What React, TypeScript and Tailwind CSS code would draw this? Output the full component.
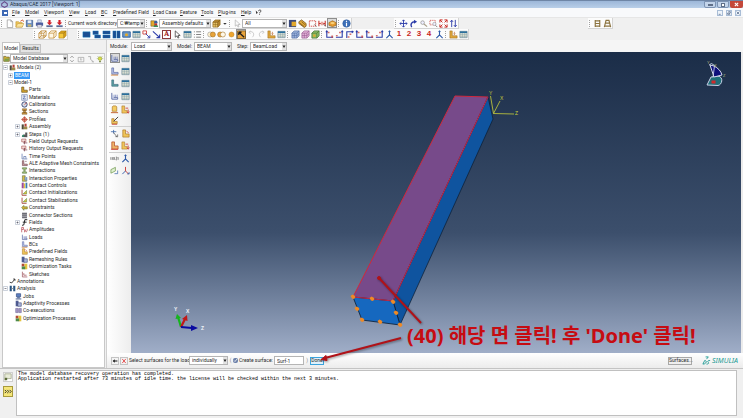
import * as React from "react";

const NAVY = "#1d4f91";
const GOLD = "#e3a92c";
const RED = "#c8322c";
const BLUE = "#2a3aa8";

// every glyph is drawn in a 10x10 box
const GLYPHS: Record<string, React.ReactNode> = {
  file: <path d="M2.5 1h4l2 2v6.500h-6z M6.500 1v2h2" fill="#fff" stroke="#8a8a8a" strokeWidth=".7" />,
  open: (
    <>
      <path d="M1 9V3h3l1 1h3v5z" fill="#f1c95c" stroke="#b98a24" strokeWidth=".6" />
      <path d="M1 9l2-4h7L8 9z" fill="#fbe39b" stroke="#b98a24" strokeWidth=".5" />
      <path d="M6 2.500l2.500-1.500 1 2" fill="none" stroke="#d2552a" strokeWidth="1" />
    </>
  ),
  save: (
    <>
      <path d="M1.500 1.500h7v7h-7z" fill="#6d8fc4" stroke="#38588d" strokeWidth=".8" />
      <path d="M3 1.500h4v3H3z" fill="#e9eef7" />
      <path d="M3 6h4v2.500H3z" fill="#cbb66b" />
    </>
  ),
  print: (
    <>
      <path d="M3 1h4v3H3z" fill="#dfe6f3" stroke="#62739c" strokeWidth=".5" />
      <path d="M1 4h8v3.500H1z" fill="#4c5fa4" />
      <path d="M2.500 6.500h5V9h-5z" fill="#eef" stroke="#556" strokeWidth=".5" />
    </>
  ),
  down: (
    <>
      <path d="M3.800 1h2.400v3H8L5 7 2 4h1.800z" fill="#d0202a" />
      <path d="M1.500 7h7v2h-7z" fill="#5b6d9a" />
    </>
  ),
  people: (
    <>
      <path d="M1 2h4v6H1z" fill={GOLD} stroke="#6b5520" strokeWidth=".6" />
      <circle cx="6.500" cy="3.500" r="1.800" fill="#3a5f9e" />
      <path d="M4 9c0-4 5-4 5 0z" fill="#3c8a58" />
      <path d="M5 5h3v2H5z" fill={RED} />
    </>
  ),
  cube: (
    <>
      <path d="M1 3.500h5.500V9H1z" fill="#e9c56a" stroke="#8a6418" strokeWidth=".7" />
      <path d="M1 3.500l2.500-2.500H9L6.500 3.500zM6.500 3.500L9 1v5.500L6.500 9z" fill="#b98a34" stroke="#8a6418" strokeWidth=".7" />
      <path d="M3.700 3.500V9M1 6.200h5.500" stroke="#8a6418" strokeWidth=".6" />
    </>
  ),
  cubeWire: (
    <path d="M1 3.500h5.500V9H1zM3.500 1H9v5.500H3.500zM1 3.500L3.500 1M6.500 3.500L9 1M6.500 9L9 6.500M1 9l2.500-2.500" fill="none" stroke="#b87d22" strokeWidth=".8" />
  ),
  cubeHidden: (
    <path d="M1 3.500h5.500V9H1zL3.500 1H9v5.500L6.500 9M6.500 3.500L9 1" fill="#fff8e6" stroke="#c08a33" strokeWidth=".8" />
  ),
  cubeSolid: (
    <>
      <path d="M1 3.500h5.500V9H1z" fill="#f6c93a" stroke="#a87a14" strokeWidth=".6" />
      <path d="M1 3.500l2.500-2.500H9L6.500 3.500zM6.500 3.500L9 1v5.500L6.500 9z" fill="#d9a31c" stroke="#a87a14" strokeWidth=".6" />
    </>
  ),
  cubeBlue: (
    <>
      <path d="M1 3.500l2.500-2.500H9v5.500L6.500 9H1z" fill="#9db4dc" stroke="#4c68a0" strokeWidth=".7" />
      <path d="M1 3.500h5.500V9M6.500 3.500L9 1M3.700 3.500V9M1 6.200h5.500L9 4" fill="none" stroke="#4c68a0" strokeWidth=".6" />
    </>
  ),
  cubePink: (
    <>
      <path d="M1 3.500l2.500-2.500H9v5.500L6.500 9H1z" fill="#e3b5d8" stroke="#91508c" strokeWidth=".7" />
      <path d="M1 3.500h5.500V9M6.500 3.500L9 1M3.700 3.500V9M1 6.200h5.500L9 4" fill="none" stroke="#91508c" strokeWidth=".6" />
    </>
  ),
  cubeGreen: (
    <>
      <path d="M1 3.500l2.500-2.500H9v5.500L6.500 9H1z" fill="#8fc06a" stroke="#3f6f2a" strokeWidth=".8" />
      <path d="M1 3.500h5.500V9M6.500 3.500L9 1" fill="none" stroke="#3f6f2a" strokeWidth=".7" />
      <path d="M2.500 5h2.500v2.500H2.500z" fill={GOLD} />
    </>
  ),
  cursor: <path d="M2.500 1v7l2-1.500 1 2.500 1.200-.6-1.100-2.300H8z" fill="#fff" stroke="#333" strokeWidth=".8" />,
  cursorDim: <path d="M2.500 1v7l2-1.500 1 2.500 1.200-.6-1.100-2.300H8z" fill="#fafafa" stroke="#aaa" strokeWidth=".7" />,
  pickA: (
    <>
      <path d="M1 1h8v8H1z" fill="#3b4a7b" />
      <path d="M4 3h5v5H4z" fill={GOLD} />
    </>
  ),
  pickB: (
    <>
      <path d="M1 3l3-2 5 4v3L7 9.500 1 5z" fill="#e0a93a" stroke="#6c4a12" strokeWidth=".8" />
      <path d="M2 4.500l5 4M4 3l4 3.500" stroke="#6c4a12" strokeWidth=".7" />
    </>
  ),
  pickBox: (
    <>
      <path d="M1.500 2h7v6h-7z" fill="none" stroke={RED} strokeWidth=".9" strokeDasharray="1.600 .8" />
      <path d="M7 6l2.500 2.500" stroke="#555" strokeWidth=".8" />
    </>
  ),
  pickH: (
    <>
      <path d="M1 2v6M8 2v6M1 5h7" stroke={RED} strokeWidth="1.200" fill="none" />
      <path d="M3 3h3v4H3z" fill="#e9a49d" />
      <path d="M6 6l3 2" stroke="#555" strokeWidth=".8" />
    </>
  ),
  ellipse: (
    <>
      <path d="M1 4l4-2 4 2v3L5 8.500 1 7z" fill="#e59b2e" stroke="#8d5a14" strokeWidth=".6" />
      <ellipse cx="5" cy="4.500" rx="2.500" ry="1.200" fill="#f8d07a" />
    </>
  ),
  info: (
    <>
      <circle cx="5" cy="5" r="4.200" fill="#3c6fb8" stroke="#24508f" strokeWidth=".5" />
      <path d="M5 4.300V8M5 2v1.200" stroke="#fff" strokeWidth="1.300" />
    </>
  ),
  move: (
    <path d="M5 1v8M1 5h8M3.600 2.400L5 1l1.400 1.400M3.600 7.600L5 9l1.400-1.400M2.400 3.600L1 5l1.400 1.400M7.600 3.600L9 5 7.600 6.400" fill="none" stroke={BLUE} strokeWidth="1" />
  ),
  rotate: (
    <>
      <path d="M3 9C1 6 3 3 6.500 3" fill="none" stroke={BLUE} strokeWidth="1.600" />
      <path d="M5.500 .8L9 3 5.500 5.400z" fill={BLUE} />
    </>
  ),
  lens: (
    <>
      <circle cx="4" cy="4" r="2" fill="#eef" stroke="#9b9b9b" strokeWidth=".9" />
      <path d="M5.500 5.500L9 8.500" stroke="#a9a08c" strokeWidth="1.300" />
    </>
  ),
  lensBox: (
    <>
      <path d="M1 1.500h6v5H1z" fill="none" stroke={RED} strokeWidth=".8" strokeDasharray="1.200 .8" />
      <circle cx="6" cy="5.500" r="1.800" fill="#eef" stroke="#999" strokeWidth=".7" />
      <path d="M7.200 7l2 2" stroke="#777" strokeWidth="1" />
    </>
  ),
  fit: (
    <>
      <path d="M1 4V1h3M6 1h3v3M9 6v3H6M4 9H1V6M1 1l2.800 2.800M9 1L6.200 3.800M9 9L6.200 6.200M1 9l2.800-2.800" fill="none" stroke={RED} strokeWidth="1.100" />
    </>
  ),
  updown: <path d="M3 9V1.500M1.500 3.200L3 1.300l1.500 1.900M7 1v7.500M5.500 6.800L7 8.700l1.500-1.900" fill="none" stroke={BLUE} strokeWidth="1" />,
  ladder: <path d="M2.500 1v8M7.500 1v8M2.500 2h5M2.500 5h5M2.500 8h5" stroke="#8c7440" strokeWidth="1.300" fill="none" />,
  ladderWide: <path d="M3.500 1L1.500 9M6.500 1l2 8M3.500 1.500h3M3 4.500h4M2 8h6" stroke="#8c7440" strokeWidth="1.300" fill="none" />,
  win1: <path d="M1 2h8v6H1z" fill={NAVY} stroke="#0c7fc0" strokeWidth=".5" />,
  win2: <path d="M1 1h6v4H1zM3 5.500h6.500V9H3z" fill={NAVY} stroke="#0c7fc0" strokeWidth=".4" />,
  win3: <path d="M1 1h8v3.500H1zM1 5.500h8V9H1z" fill={NAVY} stroke="#0c7fc0" strokeWidth=".4" />,
  win4: <path d="M1 1h3.500v8H1zM5.500 1H9v8H5.500z" fill={NAVY} stroke="#0c7fc0" strokeWidth=".4" />,
  image: (
    <>
      <path d="M.8 2h8.400v6H.8z" fill="#6f9ac8" stroke={NAVY} strokeWidth=".9" />
      <circle cx="5" cy="5.200" r="1.700" fill={GOLD} />
    </>
  ),
  table: (
    <>
      <path d="M1 1.500h8v7H1z" fill="#f3f0dc" stroke="#5b7d8f" strokeWidth=".7" />
      <path d="M1 1.500h8v2H1z" fill="#2b6f9c" />
      <path d="M1 5.200h8M1 7h8M3.700 3.500v5M6.400 3.500v5" stroke="#7c9aa4" strokeWidth=".6" />
    </>
  ),
  callout: (
    <>
      <path d="M1 1h4v3.500H1z" fill="#fff" stroke={RED} strokeWidth=".9" />
      <path d="M4 4l4.500 4.500M6 8.700h2.700V6" stroke={BLUE} strokeWidth="1" fill="none" />
    </>
  ),
  arrow: <path d="M1 1.500L8 8M5 8.500h3.500V5" stroke={BLUE} strokeWidth="1.200" fill="none" />,
  lines: <path d="M3.500 2H9M3.500 5H9M3.500 8H9M1 2h1M1 5h1M1 8h1" stroke="#666" strokeWidth=".9" />,
  union: (
    <>
      <circle cx="3.500" cy="5" r="2.800" fill="#fff2d0" stroke="#8b8b8b" strokeWidth=".6" />
      <circle cx="6.500" cy="5" r="2.800" fill="#e8a33a" stroke="#9b6a1c" strokeWidth=".6" />
    </>
  ),
  intersect: (
    <>
      <circle cx="3.500" cy="5" r="2.800" fill="#e8a33a" stroke="#9b6a1c" strokeWidth=".6" />
      <circle cx="6.500" cy="5" r="2.800" fill="#fff8e8" stroke="#9b6a1c" strokeWidth=".6" />
    </>
  ),
  dot: <circle cx="5" cy="5" r="2.800" fill="#eea52f" stroke="#b27918" strokeWidth=".5" />,
  eraser: (
    <>
      <path d="M.5 1h9v8.500h-9z" fill="#e8a33a" stroke="#5d4211" strokeWidth=".7" />
      <path d="M2 2.500l6 5.500M2 2.500h3M2 2.500v3" stroke="#1d1d1d" strokeWidth="1.400" />
    </>
  ),
  undo: <path d="M3 2c4-1 6 3 3 6M2 2.500L4 1M2 2.500L4 4" stroke="#c2c2c2" strokeWidth=".9" fill="none" />,
  redo: <path d="M7 2C3 1 1 5 4 8M8 2.500L6 1M8 2.500L6 4" stroke="#c2c2c2" strokeWidth=".9" fill="none" />,
  lshape: (
    <>
      <path d="M1 1h2.600v5.400H9V9H1z" fill="#e0a83d" stroke="#9c6a18" strokeWidth=".6" />
      <path d="M6 2v3M5 4l1 1 1-1" stroke="#b85b1e" strokeWidth=".7" fill="none" />
    </>
  ),
  axL: (
    <>
      <path d="M2 1v7h7M1 2.500L2 1l1 1.500" stroke={BLUE} strokeWidth="1.200" fill="none" />
      <path d="M7 6h2v2.500H7zM3 2h2v1.500H3z" fill={RED} opacity=".7" />
    </>
  ),
  axR: (
    <>
      <path d="M8 1v7H1M7 2.500L8 1l1 1.500" stroke={BLUE} strokeWidth="1.200" fill="none" />
      <path d="M4.500 2h2v1.500h-2zM1 5.500h2V7H1z" fill={RED} opacity=".7" />
    </>
  ),
  axT: (
    <>
      <path d="M9 2H2v7M7.500 1L9 2 7.500 3" stroke={BLUE} strokeWidth="1.200" fill="none" />
      <path d="M5 4h2v1.500H5zM3 7h2v1.500H3z" fill={RED} opacity=".7" />
    </>
  ),
  triad: <path d="M5 1v4.500L1.500 9M5 5.500L8.500 9M4 2l1-1 1 1" stroke="#2d59a8" strokeWidth="1.200" fill="none" />,
  triadRed: (
    <>
      <path d="M5 1v4.500M5 5.500L8.500 9" stroke={RED} strokeWidth="1" fill="none" />
      <path d="M5 5.500L1.500 9M7 8.800h2V7" stroke="#2d59a8" strokeWidth="1" fill="none" />
    </>
  ),
  load: (
    <>
      <path d="M2 1v7h6.500V6H4" fill="#dfe5f3" stroke="#4c5b9a" strokeWidth=".9" />
      <path d="M4.500 3v2.500M6.200 3v2.500M8 3v2.500" stroke="#5c6eb0" strokeWidth=".7" />
    </>
  ),
  bc: (
    <>
      <path d="M2 1v7h7V6H4V1z" fill="#b9c6ea" stroke="#4c5b9a" strokeWidth=".7" />
      <path d="M1 9h8" stroke="#d17a2a" strokeWidth=".9" />
    </>
  ),
  field: <path d="M2 1v7h7V6H4V1z" fill="#5ea6a2" stroke="#33627d" strokeWidth=".7" />,
  yellowL: (
    <>
      <path d="M2 1h3v4.500h4V9H2z" fill="#efc45a" stroke="#a8701d" strokeWidth=".7" />
      <path d="M6 2l2.500 2.500" stroke={RED} strokeWidth=".8" />
    </>
  ),
  arrowL: (
    <>
      <path d="M1 1h3v5h3v3H1z" fill="#efc45a" stroke="#a8701d" strokeWidth=".6" />
      <path d="M5 3.500h3M8 5v4M6.500 7.500L8 9l1.500-1.500" stroke={RED} strokeWidth=".9" fill="none" />
    </>
  ),
  redL: (
    <>
      <path d="M2 1h3v4.500h4V9H2z" fill="#eeb36a" stroke="#b44a23" strokeWidth=".8" />
      <path d="M1 9.300h8" stroke={RED} strokeWidth=".8" />
    </>
  ),
  editL: (
    <>
      <path d="M2 3h2.500v3H8v2.500H2z" fill="#efc45a" stroke="#a8701d" strokeWidth=".7" />
      <path d="M9 1L4 6" stroke="#444" strokeWidth="1.100" />
      <path d="M2 9.300h6" stroke={RED} strokeWidth=".8" />
    </>
  ),
  block: (
    <>
      <path d="M2.500 2l1-1h3l1 1v5h-5z" fill="#f3cd64" stroke="#a8701d" strokeWidth=".7" />
      <path d="M1 8.500h8" stroke="#c05822" strokeWidth="1" />
    </>
  ),
  cut: (
    <>
      <path d="M1 3h6M4 1v4" stroke="#3b67a8" strokeWidth=".9" />
      <path d="M4 4l4 5M6 8.500h2.500V6" stroke="#555" strokeWidth=".8" fill="none" />
    </>
  ),
  xyz: (
    <>
      <path d="M1 3.500v3M9 3.500v3" stroke="#444" strokeWidth=".7" />
      <path d="M2.500 3.500l1.500 3M4 3.500l-1.500 3M5 3.500v3M6.500 3.500h1.300l-1.300 3h1.300" stroke="#444" strokeWidth=".6" fill="none" />
    </>
  ),
  plane: (
    <>
      <path d="M1 4l5-2.500v4L1 8z" fill="#dff0d0" stroke="#5f8a3c" strokeWidth=".7" />
      <path d="M5 8.500h3.500V5" stroke="#3b67a8" strokeWidth=".8" fill="none" />
    </>
  ),
  models: (
    <>
      <path d="M1 2h3v7H1z" fill="#4d4a3a" />
      <path d="M4 5h5v4H4z" fill="#9c8b4a" />
      <path d="M5 1h3v4H5z" fill="#b5443a" />
    </>
  ),
  part: <path d="M1 1.500h3V6h5v3H1z" fill="#d8a52c" stroke="#5f4a14" strokeWidth=".9" />,
  material: (
    <>
      <path d="M1 1h8v8H1z" fill="#eef1f8" stroke="#6c7fae" strokeWidth=".9" />
      <path d="M3 3h3L3 7h4" stroke="#3d57a0" strokeWidth="1" fill="none" />
    </>
  ),
  calib: (
    <>
      <circle cx="5" cy="5" r="3.800" fill="#d6dbe6" stroke="#3c4a78" strokeWidth="1.300" />
      <path d="M5 5l3-2.500" stroke={RED} strokeWidth="1" />
    </>
  ),
  section: (
    <>
      <path d="M2 1h6v2.500H2zM3.500 3.500h3v3h-3zM1.500 6.500h7V9h-7z" fill="#c99440" stroke="#714c1c" strokeWidth=".6" />
    </>
  ),
  profile: <path d="M1 5l4-4 4 4-4 4zM1 5h8M5 1v8" fill="#e59a86" stroke="#b53e2e" strokeWidth=".9" />,
  steps: (
    <>
      <path d="M1 8.500l3-4 2 1V2h3v7z" fill="#585858" />
      <circle cx="3" cy="7" r="1.500" fill="#2f8a6a" />
    </>
  ),
  output: (
    <>
      <path d="M1 1.500h6v4H1z" fill="#f4dcd8" stroke="#a04a48" strokeWidth=".8" />
      <path d="M3 7h6M5 9V4" stroke="#7b3d48" strokeWidth="1" />
    </>
  ),
  time: <path d="M1.500 1v7.500H9M4 8V5h3v3" fill="none" stroke="#5870a8" strokeWidth="1" />,
  ale: <path d="M2 1v7h7V6H4V1zM6 2h2" fill="#cfa0a0" stroke="#70424c" strokeWidth=".9" />,
  interact: (
    <>
      <path d="M2 1h6v2H6v4h2v2H2V7h2V3H2z" fill="#a4c07c" stroke="#4b6a34" strokeWidth=".7" />
    </>
  ),
  interactProp: (
    <>
      <path d="M2 1h4v2H5v4h3v2H2z" fill="#d9bd4a" stroke="#4b5a34" strokeWidth=".7" />
      <path d="M6 3h3v5H6z" fill="#7b9ac0" />
    </>
  ),
  contact: (
    <>
      <path d="M1 1h3v8H1z" fill="#9c4a9c" />
      <path d="M4 2h2v7H4z" fill="#e8c53c" />
      <path d="M6.500 1H9v8H6.500z" fill="#3f7ab0" />
    </>
  ),
  contactInit: (
    <>
      <path d="M1.500 1v8H8" fill="none" stroke="#a03a30" strokeWidth="1.200" />
      <path d="M3 7l5-5v5z" fill="#e3c63a" stroke="#4e7f3c" strokeWidth=".7" />
    </>
  ),
  constraint: <path d="M1 5l3-3v2h5v3H4v2z" fill="#d3b23c" stroke="#5d6e2d" strokeWidth=".8" />,
  connector: (
    <>
      <path d="M1.500 1h7v8h-7z" fill="#6c6c74" />
      <path d="M1 4h8M1 6.500h8" stroke="#d0d0d8" strokeWidth=".7" />
    </>
  ),
  fieldF: <path d="M9 1H5.500L4 8.500 1.500 9M2.500 4.500H8" fill="none" stroke="#222" strokeWidth="1.400" />,
  amp: <path d="M1 9V2h2.500v3H1M5 9c0-5 1-5 1.500-2S9 8 9 4" fill="none" stroke="#b5414b" strokeWidth="1" />,
  remesh: (
    <>
      <path d="M1 1h4v8H1z" fill="#4e5b92" />
      <path d="M4 4h5v5H4z" fill="#a9b5dd" stroke="#383f6b" strokeWidth=".8" />
    </>
  ),
  opt: (
    <>
      <path d="M1 1h4v4H1z" fill="#b04a38" />
      <path d="M5 1h4v8H5z" fill="#e5c33c" />
      <path d="M1 5h5v4H1z" fill="#4e8a4a" />
    </>
  ),
  sketch: <path d="M2 1v7.500h7M4 3v3h4" fill="none" stroke="#a25a62" strokeWidth="1.100" />,
  annot: <path d="M1 6l3 1 4-5M6 1.500h2.500V4" fill="none" stroke="#222" strokeWidth="1.200" />,
  analysis: (
    <>
      <path d="M1 1h3v8H1zM6 1h3v8H6z" fill="#2b5580" />
      <path d="M4 5h2" stroke="#999" strokeWidth="1.400" />
    </>
  ),
  job: (
    <>
      <path d="M2 1h6v4.500H2z" fill="#5c7fc0" stroke="#29457e" strokeWidth=".9" />
      <path d="M1 8.500h8M3 6.800h4" stroke="#29457e" strokeWidth="1.200" />
    </>
  ),
  coexec: (
    <>
      <path d="M1 2h3.500v6H1zM5.500 2H9v6H5.500z" fill="#a99ac8" stroke="#5a5388" strokeWidth=".7" />
    </>
  ),
  folder: (
    <>
      <path d="M1 9V2h3l1 1h4v6z" fill="#d4b13a" stroke="#5f5a1c" strokeWidth=".9" />
      <path d="M3 5h6L7.500 9H1.500z" fill="#7fa04a" />
    </>
  ),
  spin: <path d="M3 3.500l2-2 2 2M3 6.500l2 2 2-2" fill="none" stroke="#777" strokeWidth=".9" />,
  upFolder: <path d="M1.500 3h7v5.500h-7zM5 7V4.500M4 5.500l1-1 1 1" fill="none" stroke="#999" strokeWidth=".8" />,
  link: <path d="M1.500 2h3v3M4 5l4 3.500M6 8.500h2.500" fill="none" stroke="#999" strokeWidth=".9" />,
  bulb: (
    <>
      <circle cx="5" cy="4.500" r="2.300" fill="#d8df4a" stroke="#7d8a28" strokeWidth=".6" />
      <path d="M4 7.500h2V9H4z" fill="#6c7a3a" />
      <path d="M1 4.500h1M8 4.500h1M2 1.500l.8.800M8 1.500l-.8.800" stroke="#7d8a28" strokeWidth=".7" />
    </>
  ),
  help: (
    <>
      <path d="M1 2l1 5 2-1.500z" fill="#222" />
      <path d="M5 3c0-2 4-2 3.500 0C8.500 4.500 6.500 4 6.500 6M6.500 7v1.200" stroke="#222" strokeWidth="1.100" fill="none" />
    </>
  ),
  back: <path d="M1 5l3.500-3v2H9v2H4.500v2z" fill="#111" />,
  close: <path d="M2 1.500l6 7M8 1.500l-6 7" stroke="#e02b2b" strokeWidth="1.300" />,
};

function Glyph({ name, className = "size-[9px]" }: { name: string; className?: string }) {
  return (
    <svg viewBox="0 0 10 10" className={`${className} shrink-0`} aria-hidden="true">
      {GLYPHS[name]}
    </svg>
  );
}

function Tool({ name, active = false }: { name: string; active?: boolean }) {
  return (
    <button
      aria-label={name}
      className={`flex h-[10px] w-[10px] shrink-0 items-center justify-center ${
        active ? "border border-[#8e8e8e] bg-[#dcdcdc]" : ""
      }`}
    >
      <Glyph name={name} />
    </button>
  );
}

const Grip = () => <span className="mr-[2px] ml-px h-[7px] w-px shrink-0 border-l border-dotted border-[#a0a0a0]" />;

function Group({ children, className = "" }: { children: React.ReactNode; className?: string }) {
  return (
    <div className={`flex h-[11px] shrink-0 items-center border-r border-b border-[#d4d4d4] bg-[#fcfcfc] ${className}`}>
      <Grip />
      {children}
    </div>
  );
}

function Combo({ label, value, className }: { label: string; value: string; className: string }) {
  return (
    <span className={`flex h-[9px] shrink-0 items-center border border-[#b5b5b5] bg-white ${className}`}>
      <select aria-label={label} className="h-full min-w-0 flex-1 appearance-none bg-transparent pl-[2px] outline-none">
        <option>{value}</option>
      </select>
      <svg viewBox="0 0 4 7" className="h-full w-[4px] shrink-0 bg-[#e2e2e2]" aria-hidden="true">
        <path d="M.5 2.500h3L2 5z" fill="#222" />
      </svg>
    </span>
  );
}

const MENU = [
  ["File", "w-[13px]"],
  ["Model", "w-[19px]"],
  ["Viewport", "w-[25px]"],
  ["View", "w-[16px]"],
  ["Load", "w-[16px]"],
  ["BC", "w-[12px]"],
  ["Predefined Field", "w-[40px]"],
  ["Load Case", "w-[27px]"],
  ["Feature", "w-[21px]"],
  ["Tools", "w-[17px]"],
  ["Plug-ins", "w-[23px]"],
  ["Help", "w-[14px]"],
];

function TitleBar() {
  return (
    <header className="flex h-[8px] shrink-0 items-center border-t border-[#6f86a6] bg-linear-to-b from-[#9cb6d8] to-[#b9cfe8]">
      <svg viewBox="0 0 10 10" className="mx-px size-[7px]" aria-hidden="true">
        <path d="M5 1l4 3v3L5 9 1 7V4z" fill="none" stroke="#6a4c8c" strokeWidth="1.500" />
      </svg>
      <h1 className="flex-1 pl-px text-[#1c2a3d]">Abaqus/CAE 2017 [Viewport: 1]</h1>
      <div className="flex h-[7px] gap-px self-start">
        <button aria-label="Minimize" className="flex w-[12px] items-center justify-center rounded-b-xs border border-[#7d93b3] bg-[#c3d4ea]">
          <span className="h-[2px] w-[5px] border border-[#5f6f88] bg-white" />
        </button>
        <button aria-label="Restore" className="flex w-[12px] items-center justify-center rounded-b-xs border border-[#7d93b3] bg-[#c3d4ea]">
          <span className="size-[4px] border border-[#5f6f88] bg-white" />
        </button>
        <button aria-label="Close" className="flex w-[13px] items-center justify-center rounded-b-xs bg-[#c4483a]">
          <svg viewBox="0 0 6 6" className="size-[5px]">
            <path d="M1 1l4 4M5 1L1 5" stroke="#fff" strokeWidth="1.300" />
          </svg>
        </button>
      </div>
    </header>
  );
}

function MenuBar() {
  return (
    <nav className="flex h-[10px] shrink-0 items-center border-b border-[#e6e6e6] bg-[#f8f9fb]">
      <span className="mx-[2px] flex size-[6px] items-center justify-center bg-[#3d68b4]">
        <span className="h-[2px] w-[3px] bg-white" />
      </span>
      <div className="flex pl-[2px]">
        {MENU.map(([name, width]) => (
          <button key={name} className={`${width} shrink-0 text-left whitespace-nowrap first-letter:underline`}>
            {name}
          </button>
        ))}
        <Glyph name="help" className="size-[7px]" />
      </div>
      <div className="ml-auto flex gap-[3px] pr-[2px]">
        {["M1 5h3", "M1 3h3v2H1zM2 1h3v2", "M1 1l4 4M5 1L1 5"].map((d) => (
          <button key={d} aria-label="Viewport window" className="size-[6px] border border-[#a9bdd6] bg-[#edf3fa]">
            <svg viewBox="0 0 6 6" className="size-full">
              <path d={d} stroke="#44597c" strokeWidth="1" fill="none" />
            </svg>
          </button>
        ))}
      </div>
    </nav>
  );
}

function Toolbars() {
  return (
    <div className="shrink-0 bg-[#f0f0f0]">
      <div className="flex h-[11px] items-center">
        <Group>
          {["file", "open", "save", "print", "down", "down"].map((n, i) => (
            <Tool key={i} name={n} />
          ))}
          <Grip />
          <span className="w-[49px] whitespace-nowrap">Current work directory:</span>
          <Combo label="Current work directory" value="C:₩temp" className="w-[28px]" />
          <Grip />
          <Tool name="people" />
          <Combo label="Color code" value="Assembly defaults" className="w-[52px]" />
          <Tool name="cube" />
          <svg viewBox="0 0 8 10" className="h-[9px] w-[7px]">
            <path d="M2.500 4.500h4l-2 2z" fill="#333" />
          </svg>
          <Grip />
          <Tool name="cursorDim" />
          <Combo label="Selection filter" value="All" className="w-[45px]" />
          {["pickA", "pickB", "pickBox", "pickH"].map((n) => (
            <Tool key={n} name={n} />
          ))}
          <Tool name="ellipse" active />
          <Grip />
          <Tool name="info" />
        </Group>
        <Group className="ml-[42px]">
          {["move", "rotate", "lens", "lensBox", "fit", "updown"].map((n) => (
            <Tool key={n} name={n} />
          ))}
        </Group>
        <Group className="ml-[129px]">
          <Tool name="ladder" />
          <Tool name="ladderWide" />
        </Group>
      </div>
      <div className="flex h-[11px] items-center pl-[33px]">
        <Group>
          <Tool name="cubeWire" />
          <Tool name="cubeHidden" />
          <Tool name="cubeSolid" />
        </Group>
        <Group className="ml-[9px]">
          {["win1", "win2", "win3", "win4", "image", "table", "callout", "arrow"].map((n) => (
            <Tool key={n} name={n} />
          ))}
          <button className="mx-px flex size-[9px] items-center justify-center border border-[#8b3a3a] bg-white font-serif text-[8px] leading-none font-bold text-[#a01818]">
            A
          </button>
          {["cursor", "table", "lines"].map((n) => (
            <Tool key={n} name={n} />
          ))}
          <Grip />
          {["union", "intersect", "dot"].map((n) => (
            <Tool key={n} name={n} />
          ))}
          <Tool name="eraser" active />
          {["undo", "redo", "lshape", "table"].map((n) => (
            <Tool key={n} name={n} />
          ))}
          <Grip />
          {["cubeBlue", "cubePink", "cubeGreen"].map((n) => (
            <Tool key={n} name={n} />
          ))}
          <Grip />
          {["axL", "axR", "axT", "axL", "axL", "axR", "triad"].map((n, i) => (
            <Tool key={i} name={n} />
          ))}
          {[1, 2, 3, 4].map((n) => (
            <button key={n} className="w-[10px] font-['Liberation_Sans',sans-serif] text-[8px] leading-none font-bold text-[#c8261e]">
              {n}
            </button>
          ))}
          <Tool name="triad" />
          <Grip />
          <Tool name="lshape" />
          <Tool name="table" />
        </Group>
      </div>
    </div>
  );
}

type Node = { text: string; icon?: string; indent: string; toggle?: "+" | "-"; selected?: boolean };

const leaf = (text: string, icon: string, toggle?: "+"): Node => ({ text, icon, toggle, indent: "pl-[12px]" });
const job = (text: string, icon: string): Node => ({ text, icon, indent: "pl-[6px]" });

const TREE: Node[] = [
  { text: "Models (2)", icon: "models", indent: "", toggle: "-" },
  { text: "BEAM", indent: "pl-[5px]", toggle: "+", selected: true },
  { text: "Model-1", indent: "pl-[5px]", toggle: "-" },
  leaf("Parts", "part"),
  leaf("Materials", "material"),
  leaf("Calibrations", "calib"),
  leaf("Sections", "section"),
  leaf("Profiles", "profile"),
  leaf("Assembly", "models", "+"),
  leaf("Steps (1)", "steps", "+"),
  leaf("Field Output Requests", "output"),
  leaf("History Output Requests", "output"),
  leaf("Time Points", "time"),
  leaf("ALE Adaptive Mesh Constraints", "ale"),
  leaf("Interactions", "interact"),
  leaf("Interaction Properties", "interactProp"),
  leaf("Contact Controls", "contact"),
  leaf("Contact Initializations", "contactInit"),
  leaf("Contact Stabilizations", "contactInit"),
  leaf("Constraints", "constraint"),
  leaf("Connector Sections", "connector"),
  leaf("Fields", "fieldF", "+"),
  leaf("Amplitudes", "amp"),
  leaf("Loads", "load"),
  leaf("BCs", "bc"),
  leaf("Predefined Fields", "yellowL"),
  leaf("Remeshing Rules", "remesh"),
  leaf("Optimization Tasks", "opt"),
  leaf("Sketches", "sketch"),
  { text: "Annotations", icon: "annot", indent: "" },
  { text: "Analysis", icon: "analysis", indent: "", toggle: "-" },
  job("Jobs", "job"),
  job("Adaptivity Processes", "remesh"),
  job("Co-executions", "coexec"),
  job("Optimization Processes", "opt"),
];

function ModelTree() {
  return (
    <aside className="flex w-[106px] shrink-0 flex-col pt-[2px] pr-px pl-[2px]">
      <div role="tablist" className="flex h-[11px] shrink-0 items-end">
        <button role="tab" aria-selected="true" className="h-[11px] w-[18px] border-x border-t border-[#c4c4c4] bg-white">
          Model
        </button>
        <button role="tab" aria-selected="false" className="h-[9px] w-[21px] border border-[#c4c4c4] bg-[#e4e4e4]">
          Results
        </button>
      </div>
      <div className="flex flex-1 flex-col border border-[#c8c8c8] bg-white">
        <div className="flex h-[10px] shrink-0 items-center border-b border-[#d8d8d8] bg-[#f6f6f6]">
          <Glyph name="folder" className="size-[7px]" />
          <Combo label="Database" value="Model Database" className="w-[58px]" />
          <div className="flex flex-1 justify-between">
            {["spin", "upFolder", "link", "bulb"].map((n) => (
              <button key={n} aria-label={n}>
                <Glyph name={n} className="size-[8px]" />
              </button>
            ))}
          </div>
        </div>
        <ul className="grid h-[258px] auto-rows-fr">
          {TREE.map((n) => (
            <li key={n.text} className={`flex items-center gap-px ${n.indent}`}>
              <span className="flex w-[5px] shrink-0 justify-center">
                {n.toggle && (
                  <svg viewBox="0 0 5 5" className="size-[5px]">
                    <path d="M.5 .5h4v4h-4z" fill="#fff" stroke="#a9b4c4" strokeWidth=".6" />
                    <path d={n.toggle === "+" ? "M1.500 2.500h2M2.500 1.500v2" : "M1.500 2.500h2"} stroke="#445" strokeWidth=".6" />
                  </svg>
                )}
              </span>
              {n.icon && <Glyph name={n.icon} className="size-[7px]" />}
              <span className={`whitespace-nowrap ${n.selected ? "bg-[#3797f5] px-px text-white" : ""}`}>{n.text}</span>
            </li>
          ))}
        </ul>
      </div>
    </aside>
  );
}

function Toolbox() {
  const sep = "grid grid-cols-2 border-b border-[#cfcfcf] justify-items-center items-center";
  return (
    <div className="flex w-[24px] shrink-0 flex-col pl-[2px]">
      <div className={`${sep} h-[52px]`}>
        <Tool name="load" active />
        <Tool name="table" />
        <Tool name="bc" />
        <Tool name="table" />
        <Tool name="field" />
        <Tool name="table" />
        <Tool name="load" />
        <Tool name="table" />
      </div>
      <div className={`${sep} h-[23px]`}>
        <Tool name="block" />
        <Tool name="arrowL" />
        <Tool name="editL" />
      </div>
      <div className={`${sep} h-[26px]`}>
        <Tool name="cut" />
        <Tool name="yellowL" />
        <Tool name="redL" />
        <Tool name="arrowL" />
      </div>
      <div className="grid h-[23px] grid-cols-2 items-center justify-items-center">
        <Tool name="xyz" />
        <Tool name="triad" />
        <Tool name="plane" />
        <Tool name="triadRed" />
      </div>
    </div>
  );
}

const NODES = [
  [353, 297],
  [372, 299],
  [393, 302],
  [357, 309],
  [396, 313],
  [362, 320],
  [380, 322],
  [400, 325],
];

function Viewport() {
  return (
    <main className="relative z-10 mr-[2px] min-h-0 flex-1 bg-linear-to-b from-[#1b2d48] via-[#3c4f6c] via-60% to-[#a0aec8]">
      {/* scene coordinates are window coordinates at the default size */}
      <svg viewBox="131 52 610 301" className="absolute inset-0 size-full overflow-visible">
        <path d="M455 96l33 1-95 204-40-4z" fill="#774a8a" stroke="#d0283c" strokeWidth="1" />
        <path d="M488 97l5 22-93 206-7-24z" fill="#0f549f" stroke="#0c1c30" strokeWidth=".7" />
        <path d="M353 297l40 4 7 24-38-5z" fill="#1668bf" stroke="#0c1c30" strokeWidth=".8" />
        <path d="M488 97l-95 204-40-4" fill="none" stroke="#c02a4c" strokeWidth="1" />
        {NODES.map(([x, y]) => (
          <path key={`${x}-${y}`} d={`M${x - 2.5} ${y - 1}l2-1.500 2 1 1 1.500-1.500 2-2-.5z`} fill="#f08a24" />
        ))}

        {/* datum axes at the beam end */}
        <g stroke="#c9cf3a" strokeWidth=".8" fill="none">
          <path d="M493.500 113.500L490.500 96M493.500 113.500L500 101M493.500 113.500l20.500 .5" />
        </g>
        <g className="font-['Liberation_Sans'] text-[5px]" fill="#c9cf3a">
          <text x="489" y="95">Y</text>
          <text x="500" y="100">X</text>
          <text x="515" y="115">Z</text>
        </g>

        {/* view triad */}
        <path d="M181 327l-3-10" stroke="#15b51c" strokeWidth="2.200" />
        <path d="M175.500 319l1.500-5 4 4z" fill="#15b51c" />
        <path d="M181 327l4-8" stroke="#c01818" strokeWidth="2.200" />
        <path d="M182 319l5-4 .5 6z" fill="#c01818" />
        <path d="M181 327l11 1" stroke="#0a0aa0" strokeWidth="2" />
        <path d="M191 325l7 3-7 3z" fill="#0a0aa0" />
        <g className="font-['Liberation_Sans'] text-[5px] font-bold" fill="#f1f4fa">
          <text x="174" y="311">Y</text>
          <text x="186" y="313">X</text>
          <text x="201" y="330">Z</text>
        </g>

        {/* view compass */}
        <path d="M707 85l4-8 7-1c6 1 4 9 0 9.500z" fill="#1f6f78" stroke="#c9d2e8" strokeWidth="1" />
        <path d="M710 65l4 12 8-2c-1-4-4-7-8-9z" fill="#0d0f7a" stroke="#d5daf0" strokeWidth="1" />
        <path d="M709 65l2.500-1.500 3 2-1.500 12" fill="none" stroke="#c9d2e8" strokeWidth=".9" />
        <path d="M711.500 80.500h4v3h-4z" fill="#d02a2a" />
        <g className="font-['Liberation_Sans'] text-[4px]" fill="#b5b884">
          <text x="707" y="64">Y</text>
          <text x="714" y="67">X</text>
          <text x="723" y="77">Z</text>
        </g>

        <g className="drop-shadow-[1px_1px_1px_rgba(0,0,0,0.4)]" stroke="#b01218" fill="#b01218">
          <path d="M379 278l42 45M401 338l-76 20" strokeWidth="2" fill="none" />
          <circle cx="379" cy="278" r="1.500" />
          <path d="M321 359.500l5-4 1 5z" />
        </g>
        <text
          x="407"
          y="343"
          fill="#c60c12"
          className="font-['Noto_Sans','Noto_Sans_CJK_KR',sans-serif] text-[20px] font-bold"
        >
          (40) 해당 면 클릭! 후 'Done' 클릭!
        </text>
      </svg>
    </main>
  );
}

function PromptArea() {
  return (
    <div className="flex h-[15px] shrink-0 items-center gap-px bg-linear-to-b from-white to-[#ececec] pl-[4px]">
      <button aria-label="Back" className="flex size-[8px] items-center justify-center border border-[#c4c4c4] bg-[#f4f4f4]">
        <Glyph name="back" className="size-[6px]" />
      </button>
      <button aria-label="Cancel" className="flex size-[8px] items-center justify-center border border-[#c4c4c4] bg-[#f4f4f4]">
        <Glyph name="close" className="size-[6px]" />
      </button>
      <span className="w-[59px] whitespace-nowrap">Select surfaces for the load</span>
      <Combo label="Selection method" value="individually" className="w-[39px]" />
      <span className="w-[3px] text-center text-[#888]">(</span>
      <label className="flex w-[40px] items-center gap-px whitespace-nowrap">
        <input type="checkbox" defaultChecked className="size-[5px] shrink-0 accent-[#6b7fa8]" />
        Create surface:
      </label>
      <input aria-label="Surface name" defaultValue="Surf-1" className="h-[9px] w-[30px] border border-[#b5b5b5] bg-white px-[2px]" />
      <span className="w-[4px] text-center text-[#888]">)</span>
      <button className="h-[8px] w-[14px] border border-[#3ba3dc] bg-[#dff1fb] leading-none">Done</button>
      <button className="mr-[9px] ml-auto h-[8px] w-[24px] border border-[#a8a8a8] bg-[#efefef] leading-none">Surfaces...</button>
      <div className="flex w-[41px] items-center gap-px text-[#1b9a94]">
        <svg viewBox="0 0 10 10" className="size-[9px] shrink-0">
          <path d="M4 1h3L5 3.500M1 9c4 0 5-4 2-4M1 9l2-4M9 5c-3 0-3 1-2 2s0 2-2 2" fill="none" stroke="currentColor" strokeWidth="1" />
        </svg>
        <span className="font-['Noto_Sans',sans-serif] text-[7px] leading-none italic">SIMULIA</span>
      </div>
    </div>
  );
}

function MessageArea() {
  return (
    <footer className="flex h-[50px] shrink-0 border-t border-[#c4c4c4] pt-px pb-[2px]">
      <div className="flex w-[16px] shrink-0 flex-col items-center gap-[4px] pt-[2px]">
        <button aria-label="Message area" className="flex size-[10px] items-center justify-center border border-[#cfcfcf] bg-white">
          <svg viewBox="0 0 10 10" className="size-[8px]">
            <path d="M1 1h8v6H4L1 9z" fill="#e8ecd8" stroke="#8d9478" strokeWidth=".8" />
            <path d="M1 6h3v3H1z" fill="#5b6a3a" />
          </svg>
        </button>
        <button aria-label="Command line" className="flex h-[11px] w-[10px] items-center justify-center border border-[#a89a3c] bg-[#f5e67a]">
          <svg viewBox="0 0 10 10" className="size-[9px]">
            <path d="M1 3l2 2-2 2M4 3l2 2-2 2M7 3l2 2-2 2" fill="none" stroke="#222" strokeWidth="1.100" />
          </svg>
        </button>
      </div>
      <div className="mr-[6px] flex-1 border border-[#c0c0c0] bg-white pt-px pl-px font-['Liberation_Mono',monospace] text-[5px] leading-[5px] text-black">
        <p>The model database recovery operation has completed.</p>
        <p>Application restarted after 73 minutes of idle time. the license will be checked within the next 3 minutes.</p>
      </div>
    </footer>
  );
}

export default function App() {
  return (
    <div className="flex h-screen flex-col overflow-hidden bg-[#f0f0f0] font-['Roboto','Noto_Sans_CJK_KR',sans-serif] text-[5px] leading-[7px] text-[#2a2a2a]">
      <TitleBar />
      <MenuBar />
      <Toolbars />
      <div className="flex min-h-0 flex-1">
        <ModelTree />
        <div className="flex min-w-0 flex-1 flex-col border-l border-[#d0d0d0] bg-linear-to-r from-white to-[#ececec] to-[26px]">
          <div className="flex h-[12px] shrink-0 items-center bg-[#f5f5f5] pl-[3px]">
            <span className="w-[21px]">Module:</span>
            <Combo label="Module" value="Load" className="w-[41px]" />
            <span className="ml-[5px] w-[17px]">Model:</span>
            <Combo label="Model" value="BEAM" className="w-[38px]" />
            <span className="ml-[5px] w-[13px]">Step:</span>
            <Combo label="Step" value="BeamLoad" className="w-[37px]" />
          </div>
          <div className="flex min-h-0 flex-1">
            <Toolbox />
            <Viewport />
          </div>
          <PromptArea />
        </div>
      </div>
      <MessageArea />
    </div>
  );
}
